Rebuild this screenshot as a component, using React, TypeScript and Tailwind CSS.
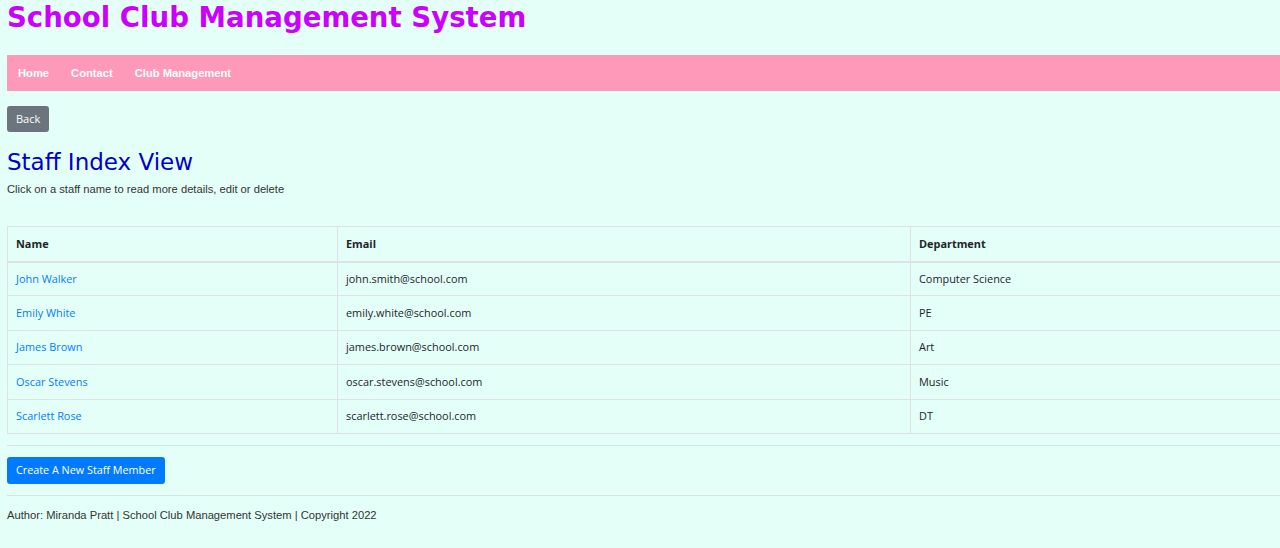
import React from "react";

const staff = [
    { name: "John Walker", email: "john.smith@school.com", dept: "Computer Science" },
    { name: "Emily White", email: "emily.white@school.com", dept: "PE" },
    { name: "James Brown", email: "james.brown@school.com", dept: "Art" },
    { name: "Oscar Stevens", email: "oscar.stevens@school.com", dept: "Music" },
    { name: "Scarlett Rose", email: "scarlett.rose@school.com", dept: "DT" },
];

const App: React.FC = () => {
    return (
        <div className="min-h-[548px] w-full overflow-hidden bg-[#e4fff8] pl-[7px] font-['Liberation_Sans',Arial,sans-serif] text-[11.2px] text-[#212529]">
            {/* TITLE */}
            <h1 className="pt-[1px] font-['DejaVu_Sans',Verdana,sans-serif] text-[27.6px] font-bold leading-[34px] text-[#cc00ff]">
                School Club Management System
            </h1>
            {/* NAV */}
            <nav className="mt-[20px] flex h-[36px] items-center gap-[22px] bg-[#ff99b9] px-[11px] font-bold text-white">
                <span>Home</span>
                <span>Contact</span>
                <span>Club Management</span>
            </nav>
            {/* BACK */}
            <div className="mt-[15px] flex">
                <button className="h-[26px] rounded-[3px] bg-[#6c757d] px-[9px] font-['Open_Sans',sans-serif] text-[11px] text-white">
                    Back
                </button>
            </div>
            <h2 className="mt-[16px] font-['DejaVu_Sans',Verdana,sans-serif] text-[23px] leading-[28px] text-[#0000cd]">
                Staff Index View
            </h2>
            <p className="mt-[6px] leading-[14px] text-[#333]">Click on a staff name to read more details, edit or delete</p>
            {/* TABLE */}
            <table className="mt-[30px] w-[1290px] border-collapse font-['Open_Sans',sans-serif] text-[10.9px]">
                <thead>
                    <tr className="h-[35px] border-b-2 border-[#dee2e6]">
                        <th className="w-[330px] border border-[#dee2e6] px-[8px] text-left font-bold">Name</th>
                        <th className="w-[573px] border border-[#dee2e6] px-[8px] text-left font-bold">Email</th>
                        <th className="border border-[#dee2e6] px-[8px] text-left font-bold">Department</th>
                    </tr>
                </thead>
                <tbody>
                    {staff.map((s) => (
                        <tr key={s.name} className="h-[34.4px]">
                            <td className="border border-[#dee2e6] px-[8px] text-[#007bff]">{s.name}</td>
                            <td className="border border-[#dee2e6] px-[8px]">{s.email}</td>
                            <td className="border border-[#dee2e6] px-[8px]">{s.dept}</td>
                        </tr>
                    ))}
                </tbody>
            </table>
            <hr className="mt-[11px] border-[#d6e4df]" />
            <div className="mt-[11px] flex">
                <button className="h-[27px] rounded-[3px] bg-[#007bff] px-[9px] font-['Open_Sans',sans-serif] text-[10.8px] text-white">
                    Create A New Staff Member
                </button>
            </div>
            <hr className="mt-[11px] border-[#d6e4df]" />
            <p className="mt-[12px] leading-[14px] text-[#333]">Author: Miranda Pratt | School Club Management System | Copyright 2022</p>
        </div>
    );
};

export default App;
